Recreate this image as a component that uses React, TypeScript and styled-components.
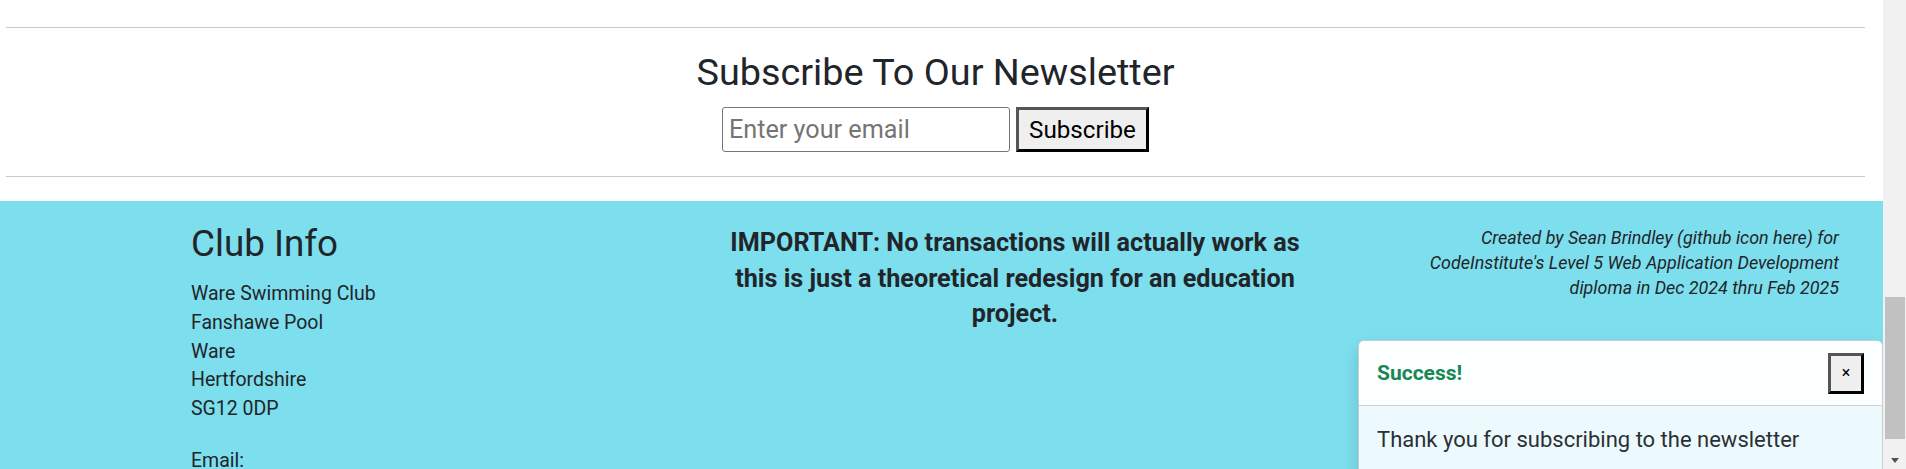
import React from "react";
import styled, { createGlobalStyle } from "styled-components";

const GlobalStyle = createGlobalStyle`
  html, body {
    margin: 0;
    padding: 0;
  }
  body {
    font-family: Roboto, "Liberation Sans", Arial, sans-serif;
    color: #212529;
    background: #ffffff;
    overflow: hidden;
  }
`;

const Frame = styled.div`
  display: flex;
  width: 1906px;
  height: 469px;
  overflow: hidden;
`;

const Viewport = styled.div`
  position: relative;
  flex: 1;
  min-width: 0;
  overflow: hidden;
`;

const Newsletter = styled.section`
  padding: 27px 18px 24px 6px;
`;

const Rule = styled.hr`
  margin: 0;
  border: 0;
  border-top: 1px solid #c8c9ca;
`;

const NewsletterBody = styled.div`
  display: flex;
  flex-direction: column;
  align-items: center;
  padding: 22px 0 24px;
`;

const Title = styled.h2`
  margin: 0 0 12px;
  font-size: 37.8px;
  font-weight: 400;
  line-height: 1.2;
  color: #212529;
`;

const Form = styled.form`
  display: flex;
  gap: 6px;
`;

const EmailInput = styled.input`
  box-sizing: border-box;
  width: 288px;
  height: 45px;
  border: 1px solid #767676;
  border-radius: 3px;
  padding: 0 6px;
  font-family: Roboto, "Liberation Sans", Arial, sans-serif;
  font-size: 25.2px;
  color: #212529;
  background: #fff;
  &::placeholder {
    color: #757575;
  }
`;

const RaisedButton = styled.button<{ $w: number; $h: number; $size: number }>`
  box-sizing: border-box;
  width: ${(p) => p.$w}px;
  height: ${(p) => p.$h}px;
  padding: 0;
  border-style: solid;
  border-width: 3px;
  border-color: #555555 #000000 #000000 #555555;
  background: #efefef;
  color: #000;
  font-family: Roboto, "Liberation Sans", Arial, sans-serif;
  font-size: ${(p) => p.$size}px;
  line-height: 1;
  display: flex;
  align-items: center;
  justify-content: center;
`;

const Footer = styled.footer`
  background: #7ddeed;
  min-height: 400px;
  padding: 21px 44px 0 191px;
  display: grid;
  grid-template-columns: 1fr 590px 1fr;
  align-items: start;
`;

const InfoColumn = styled.div`
  display: flex;
  flex-direction: column;
`;

const ColumnHeading = styled.h3`
  margin: 0 0 13.5px;
  font-size: 36.8px;
  font-weight: 400;
  line-height: 1.2;
`;

const Address = styled.p<{ $gap?: number }>`
  margin: ${(p) => p.$gap ?? 0}px 0 0;
  font-size: 19.5px;
  line-height: 28.8px;
`;

const Notice = styled.p`
  margin: 3px 0 0;
  font-size: 25.2px;
  font-weight: 700;
  line-height: 35.4px;
  text-align: center;
`;

const Credit = styled.p`
  justify-self: end;
  max-width: 445px;
  margin: 3px 0 0;
  font-size: 17.9px;
  font-style: italic;
  line-height: 25px;
  text-align: right;
`;

const Toast = styled.div`
  position: absolute;
  top: 340px;
  right: 0;
  width: 525px;
  box-sizing: border-box;
  border: 1px solid rgba(0, 0, 0, 0.175);
  border-radius: 6px;
  background: rgba(255, 255, 255, 0.85);
  box-shadow: 0 8px 16px rgba(0, 0, 0, 0.15);
  overflow: hidden;
`;

const ToastHeader = styled.div`
  box-sizing: border-box;
  height: 65px;
  display: flex;
  align-items: center;
  justify-content: space-between;
  padding: 0 18px;
  background: rgba(255, 255, 255, 0.85);
  border-bottom: 1px solid rgba(0, 0, 0, 0.175);
`;

const ToastTitle = styled.strong`
  font-size: 21px;
  font-weight: 700;
  color: #198754;
`;

const ToastBody = styled.div`
  padding: 17px 18px 20px;
  font-size: 22px;
  line-height: 1.5;
  color: #2b3035;
`;

const ScrollTrack = styled.aside`
  width: 23px;
  flex: none;
  background: #f1f1f1;
  display: flex;
  flex-direction: column;
  align-items: center;
`;

const ScrollThumb = styled.div`
  margin: 297px 0 0 1px;
  width: 20px;
  height: 142px;
  background: #c1c1c1;
`;

const ScrollArrow = styled.div`
  margin-top: auto;
  margin-bottom: 6px;
  width: 0;
  height: 0;
  border-left: 4.5px solid transparent;
  border-right: 4.5px solid transparent;
  border-top: 5px solid #505050;
`;

export default function App() {
  return (
    <>
      <GlobalStyle />
      <Frame>
        <Viewport>
          <Newsletter>
            <Rule />
            <NewsletterBody>
              <Title>Subscribe To Our Newsletter</Title>
              <Form onSubmit={(e) => e.preventDefault()}>
                <EmailInput type="email" placeholder="Enter your email" />
                <RaisedButton type="submit" $w={133} $h={45} $size={24.2}>
                  Subscribe
                </RaisedButton>
              </Form>
            </NewsletterBody>
            <Rule />
          </Newsletter>
          <Footer>
            <InfoColumn>
              <ColumnHeading>Club Info</ColumnHeading>
              <Address>
                Ware Swimming Club
                <br />
                Fanshawe Pool
                <br />
                Ware
                <br />
                Hertfordshire
                <br />
                SG12 0DP
              </Address>
              <Address $gap={23.5}>Email:</Address>
            </InfoColumn>
            <Notice>
              IMPORTANT: No transactions will actually work as this is just a
              theoretical redesign for an education project.
            </Notice>
            <Credit>
              Created by Sean Brindley (github icon here) for CodeInstitute's
              Level 5 Web Application Development diploma in Dec 2024 thru Feb
              2025
            </Credit>
          </Footer>
          <Toast role="status">
            <ToastHeader>
              <ToastTitle>Success!</ToastTitle>
              <RaisedButton type="button" aria-label="Close" $w={36} $h={41} $size={16}>
                ×
              </RaisedButton>
            </ToastHeader>
            <ToastBody>Thank you for subscribing to the newsletter</ToastBody>
          </Toast>
        </Viewport>
        <ScrollTrack>
          <ScrollThumb />
          <ScrollArrow />
        </ScrollTrack>
      </Frame>
    </>
  );
}
